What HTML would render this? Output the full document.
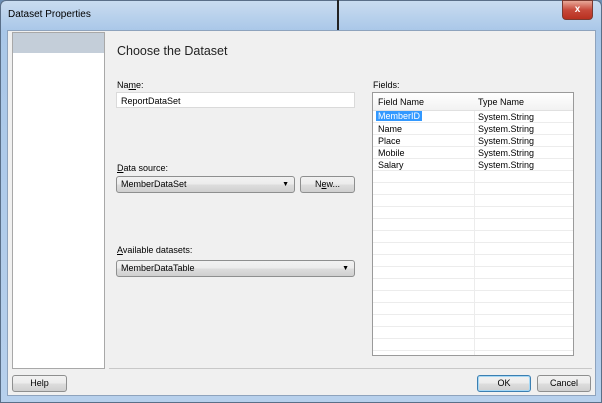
<!DOCTYPE html>
<html><head><style>
*{margin:0;padding:0;box-sizing:border-box}
body{width:602px;height:403px;overflow:hidden;background:#6d8fb5;font-family:"Liberation Sans",sans-serif;font-size:9px;color:#000;position:relative}
.a{position:absolute}
.frame{left:0;top:0;width:602px;height:403px;background:linear-gradient(#c9dcf0,#a9c7e8 30px,#b7d0ec);border:1px solid #5a6f88;border-radius:6px 6px 0 0}
.client{left:7px;top:30px;width:589px;height:366px;background:#f0f0f0;border:1px solid #8ea3bd}
.btn{border:1px solid #8e8f8f;border-radius:3px;background:linear-gradient(#f2f2f2,#ebebeb 50%,#dddddd 51%,#cfcfcf);text-align:center;line-height:15px}
.tb{background:#fff;border:1px solid #dadada}
.row{height:12px;border-bottom:1px solid #ececec;position:relative}
.row span{position:absolute;top:1px}
</style></head><body>
<div class="a frame"></div>
<div class="a" style="left:8px;top:9px;font-size:10px">Dataset Properties</div>
<div class="a" style="left:562px;top:0;width:31px;height:20px;border-radius:0 0 4px 4px;background:linear-gradient(#e8a898,#c7493a 50%,#b83020);border:1px solid #7a3a30;color:#fff;font-weight:bold;font-size:10px;text-align:center;line-height:18px">x</div>
<div class="a" style="left:337px;top:0;width:2px;height:30px;background:#222"></div>
<div class="a client"></div>
<div class="a" style="left:12px;top:32px;width:93px;height:337px;background:#fff;border:1px solid #a8a8a8"></div>
<div class="a" style="left:13px;top:33px;width:91px;height:20px;background:#c4ced9"></div>
<div class="a" style="left:117px;top:44px;font-size:12.5px;color:#222">Choose the Dataset</div>
<div class="a" style="left:117px;top:80px">Na<u>m</u>e:</div>
<div class="a tb" style="left:116px;top:92px;width:239px;height:16px;padding:3px 4px">ReportDataSet</div>
<div class="a" style="left:117px;top:163px"><u>D</u>ata source:</div>
<div class="a btn" style="left:116px;top:176px;width:179px;height:17px;text-align:left;padding-left:4px">MemberDataSet<span style="position:absolute;right:5px;font-size:7px">▼</span></div>
<div class="a btn" style="left:300px;top:176px;width:55px;height:17px">N<u>e</u>w...</div>
<div class="a" style="left:117px;top:245px"><u>A</u>vailable datasets:</div>
<div class="a btn" style="left:116px;top:260px;width:239px;height:17px;text-align:left;padding-left:4px">MemberDataTable<span style="position:absolute;right:5px;font-size:7px">▼</span></div>
<div class="a" style="left:373px;top:80px">Fields:</div>
<div class="a" style="left:372px;top:92px;width:202px;height:264px;background:#fff;border:1px solid #9a9a9a;overflow:hidden">
 <div class="a" style="left:101px;top:0;width:1px;height:264px;background:#ececec"></div>
 <div class="row" style="height:18px;background:linear-gradient(#fff,#f2f2f2);border-bottom:1px solid #e0e0e0"><span style="left:5px;top:4px">Field Name</span><span style="left:105px;top:4px">Type Name</span></div>
 <div class="row"><span style="left:3px;top:0;background:#3399ff;color:#fff;padding:0 2px">MemberID</span><span style="left:105px">System.String</span></div>
 <div class="row"><span style="left:5px">Name</span><span style="left:105px">System.String</span></div>
 <div class="row"><span style="left:5px">Place</span><span style="left:105px">System.String</span></div>
 <div class="row"><span style="left:5px">Mobile</span><span style="left:105px">System.String</span></div>
 <div class="row"><span style="left:5px">Salary</span><span style="left:105px">System.String</span></div>
 <div class="row"></div><div class="row"></div><div class="row"></div><div class="row"></div><div class="row"></div><div class="row"></div><div class="row"></div><div class="row"></div><div class="row"></div><div class="row"></div><div class="row"></div><div class="row"></div><div class="row"></div><div class="row"></div><div class="row"></div>
</div>
<div class="a" style="left:109px;top:368px;width:483px;height:1px;background:#c8c8c8"></div>
<div class="a btn" style="left:12px;top:375px;width:55px;height:17px">Help</div>
<div class="a btn" style="left:477px;top:375px;width:54px;height:17px;border-color:#3c7fb1;box-shadow:inset 0 0 0 1px #a6d8f5">OK</div>
<div class="a btn" style="left:537px;top:375px;width:54px;height:17px">Cancel</div>
</body></html>
